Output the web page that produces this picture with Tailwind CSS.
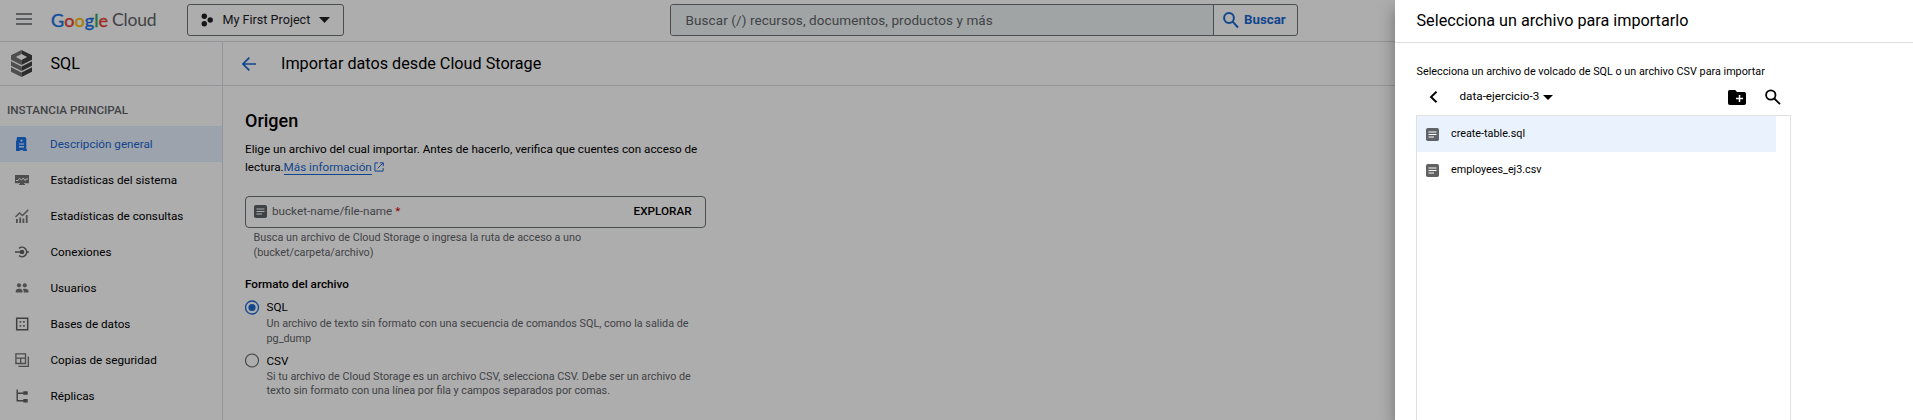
<!DOCTYPE html>
<html lang="es">
<head>
<meta charset="utf-8">
<title>SQL - Google Cloud</title>
<script src="https://cdn.jsdelivr.net/npm/@tailwindcss/browser@4"></script>
</head>
<body class="h-[420px] w-[1913px] overflow-hidden bg-white font-['Roboto',sans-serif] text-[11.7px] text-black">
<div class="relative h-[420px] overflow-hidden">

  <div class="flex h-full flex-col">
    <header class="flex h-[42px] shrink-0 items-center border-b border-[#dadce0] pb-px">
      <svg class="ml-4 h-4 w-4 shrink-0" viewBox="0 0 16 16" fill="#5f6368"><path d="M0 1.200h16v1.600H0zM0 6.200h16v1.600H0zM0 11.200h16v1.600H0z"/></svg>
      <div class="ml-[19px] flex w-[136px] items-center font-['Lato',sans-serif] leading-5">
        <span class="w-[61px] text-[18px] tracking-[0.1px] [-webkit-text-stroke:0.4px]"><span class="text-[#1a73e8]">G</span><span class="text-[#ea4335]">o</span><span class="text-[#fbbc04]">o</span><span class="text-[#1a73e8]">g</span><span class="text-[#34a853]">l</span><span class="text-[#ea4335]">e</span></span>
        <span class="text-[17.5px] tracking-[-0.2px] text-[#5f6368]">Cloud</span>
      </div>
      <button class="flex h-8 w-[157px] items-center rounded-[3px] border border-[#6c7377] pl-[13px] text-[12.6px] text-[#202124]">
        <svg class="h-[14px] w-3 shrink-0" viewBox="0 0 12 14" fill="#202124"><circle cx="3.3" cy="3.2" r="2.7"/><circle cx="9.2" cy="7" r="2.7"/><circle cx="3.3" cy="10.8" r="2.7"/></svg>
        <span class="ml-[9.5px]">My First Project</span>
        <svg class="ml-[9px] h-[6px] w-[11px]" viewBox="0 0 11 6" fill="#202124"><path d="M0 0h11L5.500 6z"/></svg>
      </button>
      <div class="ml-[326px] flex h-8 w-[628px] overflow-hidden rounded-[3px] border border-[#6c7377]">
        <div class="flex w-[543px] items-center border-r border-[#6c7377] bg-[#edf2f3] pl-[14.5px] text-[13.5px] tracking-[0.09px] text-[#5f6368]">Buscar (/) recursos, documentos, productos y más</div>
        <button class="flex grow items-center pl-[9px] text-[13.3px] font-bold text-[#1967d2]">
          <svg class="mr-[5px] h-[17px] w-4" viewBox="0 0 16 17" fill="none" stroke="#1967d2" stroke-width="2"><circle cx="6" cy="6" r="4.9"/><path d="M9.600 9.600 15 15.500"/></svg>Buscar</button>
      </div>
    </header>

    <div class="flex grow">
      <aside class="flex w-[223px] shrink-0 flex-col border-r border-[#dadce0]">
        <div class="flex h-[44px] items-center border-b border-[#dadce0]">
          <svg class="ml-[11px] h-[27px] w-[21px]" viewBox="0 0 21 27"><path fill="#757575" d="M10.500 0 0 5.200v4.500l10.500 5.200z"/><path fill="#424242" d="M10.500 0 21 5.200v4.500l-10.500 5.200z"/><path fill="#fff" d="m10.500 3.900 5.600 3-5.600 3-5.600-3z"/><path fill="#757575" d="m0 11.200 10.500 5.200v4.500L0 15.700zM0 17.200l10.500 5.200v4.500L0 21.700z"/><path fill="#424242" d="m21 11.200-10.500 5.200v4.500L21 15.700zM21 17.200l-10.500 5.200v4.500L21 21.700z"/></svg>
          <span class="ml-[18.5px] pt-px text-[16.2px]">SQL</span>
        </div>
        <div class="flex h-10 items-center pl-[7px] pt-[9px] font-medium text-[#5f6368]">INSTANCIA PRINCIPAL</div>
        <nav class="flex flex-col">
          <a class="flex h-9 items-center bg-[#e8f0fe] pl-[15px] text-[#1967d2]"><svg class="mr-[21px] h-[14px] w-[14px]" viewBox="0 0 14 14"><path fill="#1a73e8" d="M3 0h6.500A1.800 1.800 0 0 1 11.300 1.800V12.500H12V14H8.500l-.5-.8H5L4.500 14H1V3.500h.7V1.300A1.300 1.300 0 0 1 3 0z"/><path fill="#fff" d="M5.600 2.800h1.800v1.700H5.600zM4 6.500h5v1.100H4zM4 9.300h5v1.100H4z"/></svg><span class="pt-px">Descripción general</span></a>
          <a class="flex h-9 items-center pl-[15px]"><svg class="mr-[21px] h-[14px] w-[14px]" viewBox="0 0 14 14"><path fill="#757575" d="M0 2h14v8.300H9V11h1v1H4v-1h1v-.7H0z"/><path fill="none" stroke="#fff" d="M1 7.500h2l1.500-2 2 1.500L8.300 5l1.700 2.500 1-1.500H13"/></svg><span class="ml-[0.5px] pt-px">Estadísticas del sistema</span></a>
          <a class="flex h-9 items-center pl-[15px]"><svg class="mr-[21px] h-[14px] w-[14px]" viewBox="0 0 14 14"><path fill="#757575" d="M1 10h1.800v4H1zM4.300 8.500h1.800V14H4.300zM7.500 9.500h1.800V14H7.500zM10.800 6h1.800v8h-1.800z"/><path fill="none" stroke="#757575" stroke-width="1.400" d="m.5 8 4-4 3 2.500L13.300.7"/></svg><span class="ml-[0.5px] pt-px">Estadísticas de consultas</span></a>
          <a class="flex h-9 items-center pl-[15px]"><svg class="mr-[21px] h-[14px] w-[14px]" viewBox="0 0 14 14"><g fill="none" stroke="#616161" stroke-width="1.500"><path d="M0 7h6M11 7h3.500M4 3.300A4.700 4.700 0 1 1 4 10.700"/></g><circle cx="7" cy="7" r="2.300" fill="#616161"/></svg><span class="ml-[0.5px] pt-px">Conexiones</span></a>
          <a class="flex h-9 items-center pl-[15px]"><svg class="mr-[21px] h-[14px] w-[14px]" viewBox="0 0 14 14" fill="#757575"><circle cx="4" cy="4.300" r="2.100"/><circle cx="9.800" cy="4.300" r="2.100"/><path d="M.7 11.600V10c0-1.700 2-2.300 3.500-2.300S7.500 8.300 7.500 10v1.600zM8.700 11.600V10c0-1-.3-1.600-1-2.100 1.800-.5 5.800-.2 5.800 2.100v1.600z"/></svg><span class="ml-[0.5px] pt-px">Usuarios</span></a>
          <a class="flex h-9 items-center pl-[15px]"><svg class="mr-[21px] h-[14px] w-[14px]" viewBox="0 0 14 14"><path fill="none" stroke="#616161" stroke-width="1.500" d="M1.700 1.200h11v11.600h-11z"/><path fill="#757575" d="M4.500 4h1.800v1.700H4.500zM8 4h1.800v1.700H8zM4.500 8h1.800v1.700H4.500zM8 8h1.800v1.700H8z"/></svg><span class="ml-[0.5px] pt-px">Bases de datos</span></a>
          <a class="flex h-9 items-center pl-[15px]"><svg class="mr-[21px] h-[14px] w-[14px]" viewBox="0 0 14 14" fill="none" stroke="#707070" stroke-width="1.300"><path d="M.9.900h9.600v9.600H.9zM.9 5.200h9.600M5.700 5.200v5.300"/><path d="M13.300 3.500v9.800H3.500"/></svg><span class="ml-[0.5px] pt-px">Copias de seguridad</span></a>
          <a class="flex h-9 items-center pl-[15px]"><svg class="mr-[21px] h-[14px] w-[14px]" viewBox="0 0 14 14"><path fill="none" stroke="#616161" stroke-width="1.400" d="M2.200.5v11.300H9M2.200 4.200H9"/><path fill="#616161" d="M8.300 2.300h4.400v3.500H8.300zM8.300 10h4.400v3.500H8.300z"/></svg><span class="ml-[0.5px] pt-px">Réplicas</span></a>
        </nav>
      </aside>

      <main class="flex grow flex-col">
        <div class="flex h-[44px] shrink-0 items-center border-b border-[#dadce0] pl-[19px]">
          <svg class="h-[14px] w-[14px]" viewBox="0 0 14 14" fill="none" stroke="#1967d2" stroke-width="1.700"><path d="M14 7H1.300M7.300.7 1 7l6.300 6.300"/></svg>
          <h1 class="ml-[25px] pt-px text-[16.200px]">Importar datos desde Cloud Storage</h1>
        </div>
        <div class="flex w-[484px] flex-col pl-[22px]">
          <h2 class="mt-[23px] text-[18px] font-medium leading-[24px]">Origen</h2>
          <p class="mt-[7px] leading-[18px]">Elige un archivo del cual importar. Antes de hacerlo, verifica que cuentes con acceso de<br>lectura.<a class="inline-block h-[17px] border-b border-[#1967d2] text-[#1967d2]">Más información</a><svg class="ml-[2px] inline h-[10px] w-[10px] align-[-1px]" viewBox="0 0 11 11" fill="none" stroke="#1967d2" stroke-width="1.100"><path d="M4.500 1H1v9h9V6.500M6.500.900h3.700v3.700M10 1 4 7"/></svg></p>
          <div class="mt-[20px] flex h-8 w-[461px] items-center rounded-[4px] border border-[#6c7377] pl-2 text-[#5f6368]">
            <svg class="mb-px h-[13px] w-[13px]" viewBox="0 0 13 13"><rect width="13" height="13" rx="1.800" fill="#5f6368"/><path stroke="#fff" d="M2.500 4h8M2.500 6.500h8M2.500 9h5.500"/></svg>
            <span class="ml-[5px] grow">bucket-name/file-name <span class="text-[#d50000]">*</span></span>
            <span class="mr-[13.5px] pb-px font-medium text-black">EXPLORAR</span>
          </div>
          <p class="ml-[8.5px] mt-[2px] text-[10.8px] leading-[15px] text-[#5f6368]">Busca un archivo de Cloud Storage o ingresa la ruta de acceso a uno<br>(bucket/carpeta/archivo)</p>
          <h3 class="mt-[15px] font-medium leading-[18px]">Formato del archivo</h3>
          <div class="mt-[6px] flex">
            <svg class="mt-px h-[15px] w-[15px] shrink-0" viewBox="0 0 15 15"><circle cx="7" cy="7.500" r="6.500" fill="none" stroke="#1967d2" stroke-width="1.300"/><circle cx="7" cy="7.500" r="3.600" fill="#1967d2"/></svg>
            <div class="ml-[6.500px] whitespace-nowrap"><div class="leading-[17px]">SQL</div><div class="text-[10.8px] leading-[15px] text-[#5f6368]">Un archivo de texto sin formato con una secuencia de comandos SQL, como la salida de<br>pg_dump</div></div>
          </div>
          <div class="mt-[6px] flex">
            <svg class="mt-px h-[15px] w-[15px] shrink-0" viewBox="0 0 15 15"><circle cx="7" cy="7.500" r="6.500" fill="none" stroke="#5f6368" stroke-width="1.100"/></svg>
            <div class="ml-[6.500px] whitespace-nowrap"><div class="leading-[18px]">CSV</div><div class="text-[10.8px] leading-[14px] text-[#5f6368]">Si tu archivo de Cloud Storage es un archivo CSV, selecciona CSV. Debe ser un archivo de<br>texto sin formato con una línea por fila y campos separados por comas.</div></div>
          </div>
        </div>
      </main>
    </div>
  </div>

  <div class="absolute inset-0 bg-black/32"></div>

  <section class="absolute inset-y-0 right-0 flex w-[518px] flex-col bg-white shadow-[0_8px_16px_rgba(0,0,0,0.35)]">
    <h2 class="flex h-[43px] shrink-0 items-center border-b border-[#e0e0e0] pl-[21.500px] text-[16.2px]">Selecciona un archivo para importarlo</h2>
    <p class="mt-[20px] pl-[21.500px] text-[10.8px] leading-[18px]">Selecciona un archivo de volcado de SQL o un archivo CSV para importar</p>
    <div class="ml-[21px] mt-[4px] flex h-[24px] items-center">
      <svg class="ml-[12.500px] h-3 w-[9px]" viewBox="0 0 9 12" fill="none" stroke="#000" stroke-width="1.900"><path d="M7.500.7 2 6l5.500 5.300"/></svg>
      <span class="ml-[22px] w-[81px]">data-ejercicio-3</span>
      <svg class="ml-[2.500px] h-[5px] w-[10px]" viewBox="0 0 10 5"><path d="M0 0h10L5 5z"/></svg>
      <svg class="ml-[175px] h-[15px] w-[18px]" viewBox="0 0 18 15"><path d="M1.800 0h5.400L9 1.900h7.200A1.800 1.800 0 0 1 18 3.700v9.500a1.800 1.800 0 0 1-1.800 1.800H1.800A1.800 1.800 0 0 1 0 13.200V1.800A1.800 1.800 0 0 1 1.800 0z"/><path stroke="#fff" stroke-width="1.500" d="M8 8.500h7M11.500 5v7"/></svg>
      <svg class="ml-[19px] h-4 w-4" viewBox="0 0 16 16" fill="none" stroke="#000" stroke-width="1.800"><circle cx="5.800" cy="6" r="4.700"/><path d="m9.300 9.500 5.700 5.700"/></svg>
    </div>
    <div class="ml-[21px] mt-[6px] w-[375px] grow border-x border-t border-[#e0e0e0] text-[10.8px]">
      <div class="flex h-9 w-[359px] items-center bg-[#eaf2fe] pl-[9px]">
        <svg class="mr-[12px] h-[13px] w-[13px]" viewBox="0 0 13 13"><rect width="13" height="13" rx="1.800" fill="#5f6368"/><path stroke="#fff" d="M2.500 4h8M2.500 6.500h8M2.500 9h5.500"/></svg>create-table.sql</div>
      <div class="flex h-9 w-[359px] items-center pl-[9px]">
        <svg class="mr-[12px] h-[13px] w-[13px]" viewBox="0 0 13 13"><rect width="13" height="13" rx="1.800" fill="#616161"/><path stroke="#fff" d="M2.500 4h8M2.500 6.500h8M2.500 9h5.500"/></svg>employees_ej3.csv</div>
    </div>
  </section>
</div>
</body>
</html>
